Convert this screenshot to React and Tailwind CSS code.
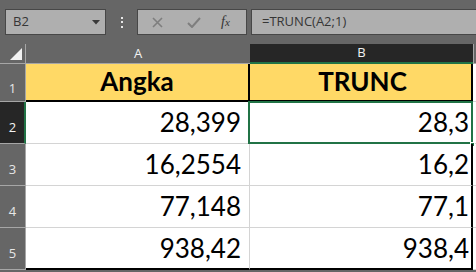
export default function App() {
  const rows = [
    { n: 2, a: "28,399", b: "28,3", sel: true },
    { n: 3, a: "16,2554", b: "16,2" },
    { n: 4, a: "77,148", b: "77,1" },
    { n: 5, a: "938,42", b: "938,4", last: true },
  ];

  return (
    <div className="w-[476px] h-[272px] overflow-hidden bg-[#666666] font-['Open_Sans',sans-serif]">
      {/* formula bar */}
      <div className="h-[44px] flex items-start pt-[9px] pl-[5px]">
        <div className="w-[101px] h-[26px] border border-[#474747] bg-[#afafaf] flex items-center justify-between pl-[7px] pr-[5px]">
          <span className="text-[13px] text-[#363636]">B2</span>
          <svg width="8" height="5" viewBox="0 0 8 5">
            <path d="M0 0h8L4 4.5z" fill="#3a3a3a" />
          </svg>
        </div>
        <div className="w-[31px] h-[26px] flex flex-col items-center justify-center gap-[2.5px]">
          <span className="w-[2px] h-[2px] bg-[#e8e8e8]" />
          <span className="w-[2px] h-[2px] bg-[#e8e8e8]" />
          <span className="w-[2px] h-[2px] bg-[#e8e8e8]" />
        </div>
        <div className="w-[110px] h-[26px] border border-[#474747] bg-[#afafaf] flex items-center">
          <svg className="ml-[14px]" width="11" height="11" viewBox="0 0 11 11">
            <path d="M1 1l9 9M10 1l-9 9" stroke="#7e7e7e" strokeWidth="1.6" />
          </svg>
          <svg className="ml-[24px]" width="14" height="11" viewBox="0 0 14 11">
            <path d="M1 6l4 4 8-9" stroke="#7e7e7e" strokeWidth="2" fill="none" />
          </svg>
          <span className="ml-[20px] text-[14px] italic text-[#333333] font-['Liberation_Serif',serif] leading-none">
            f<span className="text-[11px]">x</span>
          </span>
        </div>
        <div className="flex-1 h-[26px] ml-[4px] border border-[#474747] border-r-0 bg-[#afafaf] flex items-center pl-[10px]">
          <span className="text-[13px] text-[#363636]">=TRUNC(A2;1)</span>
        </div>
      </div>

      {/* column headers */}
      <div className="h-[20px] flex">
        <div className="w-[26px] h-full border-r border-b border-[#a6a6a6] flex items-end justify-end pr-[3px] pb-[3px]">
          <svg width="12" height="12" viewBox="0 0 12 12">
            <path d="M12 0v12H0z" fill="#f2f2f2" />
          </svg>
        </div>
        <div className="w-[224px] h-full border-b border-[#a6a6a6] flex items-center justify-center text-[13px] text-[#f2f2f2]">
          A
        </div>
        <div className="w-[223px] h-full bg-[#262626] border-b-2 border-[#217346] flex items-center justify-center text-[13px] text-[#f2f2f2]">
          B
        </div>
        <div className="flex-1 h-full border-l border-b border-[#a6a6a6]" />
      </div>

      {/* header row */}
      <div className="h-[38px] flex">
        <div className="w-[26px] h-full border-r border-b border-[#a6a6a6] flex items-end justify-center pb-[3px] text-[13px] text-[#e6e6e6]">
          1
        </div>
        <div className="w-[224px] h-full bg-[#ffd966] border-r-2 border-b-2 border-black flex items-end justify-center pb-[3px] font-['Lato',sans-serif] font-bold text-[26px] leading-none text-black">
          <span className="pb-[3px]">Angka</span>
        </div>
        <div className="w-[223px] h-full bg-[#ffd966] border-r-2 border-b-2 border-black flex items-end justify-center pb-[3px] font-['Lato',sans-serif] font-bold text-[26px] leading-none text-black">
          <span className="pb-[3px] pl-[4px]">TRUNC</span>
        </div>
        <div className="flex-1 h-full bg-white border-b border-[#d4d4d4]" />
      </div>

      {/* data rows */}
      {rows.map((r) => (
        <div key={r.n} className="h-[42px] flex">
          <div
            className={
              r.sel
                ? "w-[26px] h-full bg-[#262626] border-r-2 border-b border-r-[#217346] border-b-[#a6a6a6] flex items-end justify-center pb-[6px] pl-[1px] text-[13px] text-[#f2f2f2]"
                : "w-[26px] h-full border-r border-b border-[#a6a6a6] flex items-end justify-center pb-[6px] text-[13px] text-[#e6e6e6]"
            }
          >
            {r.n}
          </div>
          <div
            className={
              r.last
                ? "w-[224px] h-full bg-white border-r border-b-2 border-r-[#d4d4d4] border-b-black flex items-end justify-end pr-[8px] pb-[7px] font-['Lato',sans-serif] text-[26px] leading-none text-black"
                : "w-[224px] h-full bg-white border-r border-b border-[#d4d4d4] flex items-end justify-end pr-[8px] pb-[8px] font-['Lato',sans-serif] text-[26px] leading-none text-black"
            }
          >
            {r.a}
          </div>
          <div
            className={
              r.last
                ? "relative w-[223px] h-full bg-white border-r-2 border-b-2 border-black flex items-end justify-end pr-[2px] pb-[7px] font-['Lato',sans-serif] text-[26px] leading-none text-black"
                : "relative w-[223px] h-full bg-white border-r-2 border-b border-r-black border-b-[#d4d4d4] flex items-end justify-end pr-[2px] pb-[8px] font-['Lato',sans-serif] text-[26px] leading-none text-black"
            }
          >
            {r.b}
            {r.sel && (
              <>
                <div className="absolute -left-[2px] -top-[1px] -right-[2px] -bottom-[1px] border-2 border-[#217346]" />
                <div className="absolute -right-[4px] -bottom-[4px] w-[5px] h-[5px] bg-[#217346] border border-white" />
              </>
            )}
          </div>
          <div className="flex-1 h-full bg-white border-b border-[#d4d4d4]" />
        </div>
      ))}
    </div>
  );
}
